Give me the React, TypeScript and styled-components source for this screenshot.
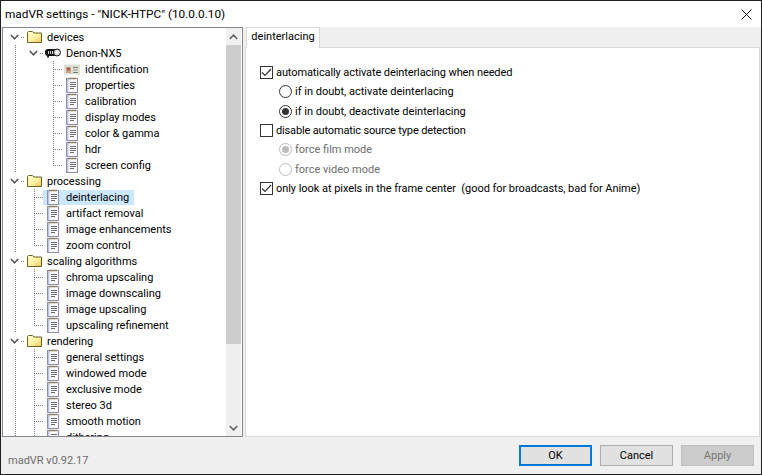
import React from 'react';
import styled, { createGlobalStyle } from 'styled-components';

const GlobalStyle = createGlobalStyle`
    html, body {
        margin: 0;
        padding: 0;
        background: #f0f0f0;
    }
    body {
        font-family: Roboto, "Liberation Sans", sans-serif;
        font-size: 11px;
        color: #000;
    }
`

const Window = styled.div`
    width: 762px;
    height: 475px;
    box-sizing: border-box;
    border: 1px solid #1f1f1f;
    background: #f0f0f0;
    display: flex;
    flex-direction: column;
    overflow: hidden;
`
const TitleBar = styled.div`
    height: 26px;
    flex: none;
    background: #fff;
    display: flex;
    align-items: center;
    justify-content: space-between;
    padding-left: 4px;
    padding-right: 9px;
    font-size: 11.8px;
`
const CloseButton = styled.div`
    display: flex;
    align-items: center;
    color: #111;
`
const Body = styled.div`
    height: 410px;
    flex: none;
    display: flex;
    gap: 2px;
    padding-left: 1px;
    padding-right: 1px;
`
const TreePanel = styled.div`
    width: 241px;
    box-sizing: border-box;
    border: 1px solid #828790;
    background: #fff;
    display: flex;
    overflow: hidden;
    padding-right: 1px;
`
const TreeList = styled.div`
    flex: 1;
    padding-top: 1px;
    padding-left: 2px;
    overflow: hidden;
`
const TreeRow = styled.div`
    height: 16px;
    display: flex;
    align-items: stretch;
`
const dots = (dir: string) =>
    `repeating-linear-gradient(${dir}, #7c7c7c 0 1px, transparent 1px 2px)`

const Guide = styled.div<{ $kind: GuideKind }>`
    width: 19px;
    flex: none;
    display: flex;
    align-items: center;
    padding-left: 5px;
    box-sizing: border-box;
    background-repeat: no-repeat;
    ${({ $kind }) => {
        switch ($kind) {
            case 'line':
                return `
                    background-image: ${dots('to bottom')};
                    background-size: 1px 16px;
                    background-position: 10px 0;
                `
            case 'tee':
                return `
                    background-image: ${dots('to bottom')}, ${dots('to right')};
                    background-size: 1px 16px, 9px 1px;
                    background-position: 10px 0, 10px 8px;
                `
            case 'elbow':
                return `
                    background-image: ${dots('to bottom')}, ${dots('to right')};
                    background-size: 1px 9px, 9px 1px;
                    background-position: 10px 0, 10px 8px;
                `
            case 'open':
                return `
                    background-image: ${dots('to right')};
                    background-size: 3px 1px;
                    background-position: 16px 8px;
                `
            default:
                return ''
        }
    }}
`
const RowLabelWrap = styled.div<{ $selected?: boolean }>`
    display: flex;
    align-items: center;
    height: 15px;
    margin-top: 1px;
    padding-left: 3px;
    background: ${({ $selected }) => ($selected ? '#cce8ff' : 'transparent')};
`
const IconBox = styled.div`
    width: 16px;
    height: 16px;
    flex: none;
    margin-left: -1px;
    margin-right: 1px;
    margin-top: -1px;
    display: flex;
    align-items: center;
    justify-content: center;
`
const RowLabel = styled.div`
    padding: 0 5px 0 4px;
    height: 15px;
    line-height: 16px;
    white-space: nowrap;
`
const ScrollBar = styled.div`
    width: 15px;
    flex: none;
    background: #f0f0f0;
    display: flex;
    flex-direction: column;
    margin-left: auto;
`
const ScrollArrow = styled.div`
    height: 17px;
    flex: none;
    display: flex;
    align-items: center;
    justify-content: center;
    color: #606060;
`
const ScrollThumb = styled.div`
    height: 299px;
    flex: none;
    background: #cdcdcd;
`
const ScrollTrack = styled.div`
    flex: 1;
`
const RightPanel = styled.div`
    flex: 1;
    display: flex;
    flex-direction: column;
    min-width: 0;
`
const TabStrip = styled.div`
    height: 20px;
    flex: none;
    display: flex;
    padding-left: 1px;
    border-bottom: 1px solid #d9d9d9;
`
const Tab = styled.div`
    width: 74px;
    height: 21px;
    box-sizing: border-box;
    background: #fff;
    border: 1px solid #d9d9d9;
    border-bottom: none;
    text-align: center;
    line-height: 18px;
`
const TabPage = styled.div`
    flex: 1;
    background: #fff;
    border: 1px solid #d9d9d9;
    border-top: none;
    padding-top: 15px;
    padding-left: 14px;
`
const OptionRow = styled.div<{ $indent?: boolean; $disabled?: boolean; $tracking?: number }>`
    height: 19.33px;
    display: flex;
    align-items: center;
    gap: 3px;
    padding-left: ${({ $indent }) => ($indent ? '19px' : '0')};
    color: ${({ $disabled }) => ($disabled ? '#6d6d6d' : '#000')};
    letter-spacing: ${({ $tracking }) => $tracking ?? 0}px;
    white-space: pre;
`
const CheckBox = styled.div`
    width: 13px;
    height: 13px;
    box-sizing: border-box;
    border: 1px solid #333;
    background: #fff;
    flex: none;
    display: flex;
    align-items: center;
    justify-content: center;
`
const Radio = styled.div<{ $disabled?: boolean }>`
    width: 13px;
    height: 13px;
    box-sizing: border-box;
    border-radius: 50%;
    border: 1px solid ${({ $disabled }) => ($disabled ? '#bcbcbc' : '#333')};
    background: #fff;
    flex: none;
    display: flex;
    align-items: center;
    justify-content: center;
`
const RadioDot = styled.div<{ $disabled?: boolean }>`
    width: 7px;
    height: 7px;
    border-radius: 50%;
    background: ${({ $disabled }) => ($disabled ? '#bcbcbc' : '#333')};
`
const Footer = styled.div`
    flex: 1;
    display: flex;
    align-items: flex-start;
    padding-top: 8px;
    padding-left: 7px;
    padding-right: 7px;
`
const Version = styled.div`
    color: #6d6d6d;
    margin-top: 9px;
`
const Buttons = styled.div`
    margin-left: auto;
    display: flex;
    gap: 8px;
`
const Button = styled.div<{ $variant?: 'focus' | 'disabled' }>`
    width: 73px;
    height: 21px;
    box-sizing: border-box;
    display: flex;
    align-items: center;
    justify-content: center;
    background: ${({ $variant }) => ($variant === 'disabled' ? '#cccccc' : '#e1e1e1')};
    color: ${({ $variant }) => ($variant === 'disabled' ? '#787878' : '#000')};
    border: ${({ $variant }) => ($variant === 'focus' ? '2px solid #0078d7' : $variant === 'disabled' ? '1px solid #bfbfbf' : '1px solid #adadad')};
`

type GuideKind = 'blank' | 'line' | 'tee' | 'elbow' | 'open'
type IconKind = 'folder' | 'device' | 'card' | 'note'

interface Row {
    guides: GuideKind[]
    icon: IconKind
    label: string
    selected?: boolean
}

const FolderIcon = () => (
    <svg width="16" height="14" viewBox="0 0 16 14">
        <defs>
            <linearGradient id="folderFill" x1="0" y1="0" x2="1" y2="1">
                <stop offset="0" stopColor="#fffcd2" />
                <stop offset="0.55" stopColor="#fdf0a0" />
                <stop offset="1" stopColor="#ecc45c" />
            </linearGradient>
        </defs>
        <path d="M1.5 12.5V2.5L2.5 1.5H6.5L8 3H15.5V12.5Z" fill="url(#folderFill)" stroke="#67651f" strokeWidth="1" />
    </svg>
)

const DeviceIcon = () => (
    <svg width="16" height="10" viewBox="0 0 16 10">
        <rect x="0" y="1" width="13" height="7" rx="3" fill="#111" />
        <rect x="3" y="3" width="1" height="3" fill="#d6d6d6" />
        <rect x="5" y="3" width="1" height="3" fill="#d6d6d6" />
        <rect x="7" y="3" width="1" height="3" fill="#d6d6d6" />
        <circle cx="12" cy="4.5" r="3.5" fill="#d4d4d4" stroke="#1c1c1c" />
        <circle cx="12" cy="4.5" r="1.4" fill="#fafafa" />
        <rect x="2" y="8" width="2" height="1.5" fill="#222" />
    </svg>
)

const CardIcon = () => (
    <svg width="16" height="11" viewBox="0 0 16 11">
        <rect x="0" y="0.5" width="16" height="10" fill="#dbe0d2" />
        <rect x="2" y="3" width="5" height="6" fill="#c9a38e" />
        <circle cx="4.5" cy="5" r="1.6" fill="#a8563f" />
        <rect x="9" y="3" width="5" height="1" fill="#77807a" />
        <rect x="9" y="5.5" width="5" height="1" fill="#8f9892" />
        <rect x="9" y="8" width="5" height="1" fill="#77807a" />
    </svg>
)

const NoteIcon = () => (
    <svg width="12" height="16" viewBox="0 0 12 16">
        <rect x="0.5" y="1.5" width="11" height="14" fill="#fbfbfb" stroke="#8a90b4" />
        <rect x="1" y="2" width="1.5" height="13" fill="#c3c7e2" />
        <path d="M3 0.5V2.5M5 0.5V2.5M7 0.5V2.5M9 0.5V2.5" stroke="#8d7433" strokeWidth="1" />
        <path d="M4 5.5H10M4 7.5H10M4 9.5H10M4 11.5H8" stroke="#6a6a78" strokeWidth="1" />
    </svg>
)

const icons: Record<IconKind, () => React.ReactElement> = {
    folder: FolderIcon,
    device: DeviceIcon,
    card: CardIcon,
    note: NoteIcon,
}

const Chevron = ({ up = false, color = '#595959', size = 9 }: { up?: boolean; color?: string; size?: number }) => (
    <svg width={size} height={size - 3} viewBox="0 0 9 6">
        <path d={up ? 'M0.8 5L4.5 1.2L8.2 5' : 'M0.8 1L4.5 4.8L8.2 1'} fill="none" stroke={color} strokeWidth="1.6" />
    </svg>
)

const section = (label: string, children: string[], selected = ''): Row[] => [
    { guides: ['open'], icon: 'folder', label },
    ...children.map((child, i): Row => ({
        guides: ['line', i === children.length - 1 ? 'elbow' : 'tee'],
        icon: 'note',
        label: child,
        selected: child === selected,
    })),
]

const rows: Row[] = [
    { guides: ['open'], icon: 'folder', label: 'devices' },
    { guides: ['line', 'open'], icon: 'device', label: 'Denon-NX5' },
    { guides: ['line', 'blank', 'tee'], icon: 'card', label: 'identification' },
    ...['properties', 'calibration', 'display modes', 'color & gamma', 'hdr'].map((label): Row => ({
        guides: ['line', 'blank', 'tee'],
        icon: 'note',
        label,
    })),
    { guides: ['line', 'blank', 'elbow'], icon: 'note', label: 'screen config' },
    ...section('processing', ['deinterlacing', 'artifact removal', 'image enhancements', 'zoom control'], 'deinterlacing'),
    ...section('scaling algorithms', ['chroma upscaling', 'image downscaling', 'image upscaling', 'upscaling refinement']),
    ...section('rendering', ['general settings', 'windowed mode', 'exclusive mode', 'stereo 3d', 'smooth motion', 'dithering']),
]

const Tick = () => (
    <svg width="11" height="11" viewBox="0 0 11 11">
        <path d="M1 5.5L4 8.5L10 2" fill="none" stroke="#333" strokeWidth="1.2" />
    </svg>
)

export default function App() {
    return (
        <Window>
            <GlobalStyle />
            <TitleBar>
                <span>madVR settings - "NICK-HTPC" (10.0.0.10)</span>
                <CloseButton>
                    <svg width="11" height="11" viewBox="0 0 11 11">
                        <path d="M0.5 0.5L10.5 10.5M10.5 0.5L0.5 10.5" stroke="#111" strokeWidth="1" />
                    </svg>
                </CloseButton>
            </TitleBar>
            <Body>
                <TreePanel>
                    <TreeList>
                        {rows.map((row) => {
                            const Icon = icons[row.icon]
                            return (
                                <TreeRow key={row.label}>
                                    {row.guides.map((kind, i) => (
                                        <Guide key={i} $kind={kind}>
                                            {kind === 'open' && <Chevron />}
                                        </Guide>
                                    ))}
                                    <RowLabelWrap $selected={row.selected}>
                                        <IconBox><Icon /></IconBox>
                                        <RowLabel>{row.label}</RowLabel>
                                    </RowLabelWrap>
                                </TreeRow>
                            )
                        })}
                    </TreeList>
                    <ScrollBar>
                        <ScrollArrow><Chevron up size={9} color="#606060" /></ScrollArrow>
                        <ScrollThumb />
                        <ScrollTrack />
                        <ScrollArrow><Chevron size={9} color="#606060" /></ScrollArrow>
                    </ScrollBar>
                </TreePanel>
                <RightPanel>
                    <TabStrip>
                        <Tab>deinterlacing</Tab>
                    </TabStrip>
                    <TabPage>
                        <OptionRow $tracking={-0.1}>
                            <CheckBox><Tick /></CheckBox>
                            automatically activate deinterlacing when needed
                        </OptionRow>
                        <OptionRow $indent>
                            <Radio />
                            if in doubt, activate deinterlacing
                        </OptionRow>
                        <OptionRow $indent>
                            <Radio><RadioDot /></Radio>
                            if in doubt, deactivate deinterlacing
                        </OptionRow>
                        <OptionRow $tracking={-0.15}>
                            <CheckBox />
                            disable automatic source type detection
                        </OptionRow>
                        <OptionRow $indent $disabled>
                            <Radio $disabled><RadioDot $disabled /></Radio>
                            force film mode
                        </OptionRow>
                        <OptionRow $indent $disabled>
                            <Radio $disabled />
                            force video mode
                        </OptionRow>
                        <OptionRow $tracking={-0.05}>
                            <CheckBox><Tick /></CheckBox>
                            {'only look at pixels in the frame center  (good for broadcasts, bad for Anime)'}
                        </OptionRow>
                    </TabPage>
                </RightPanel>
            </Body>
            <Footer>
                <Version>madVR v0.92.17</Version>
                <Buttons>
                    <Button $variant="focus">OK</Button>
                    <Button>Cancel</Button>
                    <Button $variant="disabled">Apply</Button>
                </Buttons>
            </Footer>
        </Window>
    )
}
